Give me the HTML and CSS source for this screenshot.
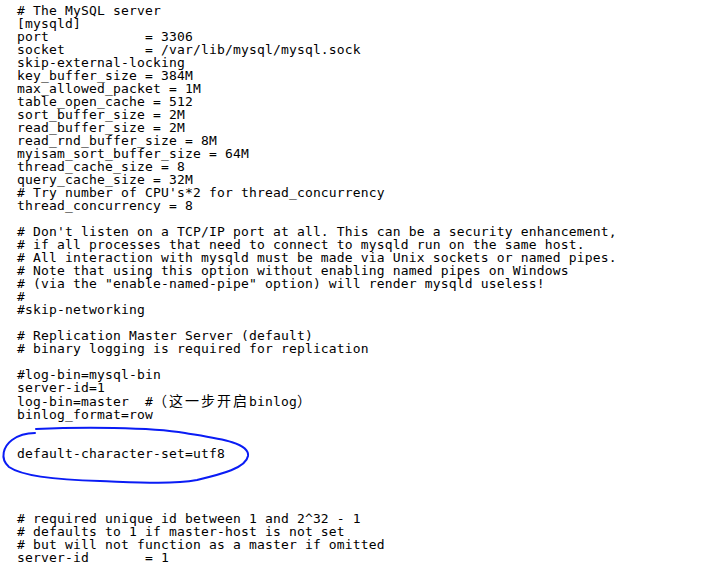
FILE: index.html
```html
<!DOCTYPE html>
<html>
<head>
<meta charset="utf-8">
<link rel="stylesheet" href="styles.css">
</head>
<body>
<div class="page">
<pre class="conf"># The MySQL server
[mysqld]
port            = 3306
socket          = /var/lib/mysql/mysql.sock
skip-external-locking
key_buffer_size = 384M
max_allowed_packet = 1M
table_open_cache = 512
sort_buffer_size = 2M
read_buffer_size = 2M
read_rnd_buffer_size = 8M
myisam_sort_buffer_size = 64M
thread_cache_size = 8
query_cache_size = 32M
# Try number of CPU's*2 for thread_concurrency
thread_concurrency = 8

# Don't listen on a TCP/IP port at all. This can be a security enhancement,
# if all processes that need to connect to mysqld run on the same host.
# All interaction with mysqld must be made via Unix sockets or named pipes.
# Note that using this option without enabling named pipes on Windows
# (via the "enable-named-pipe" option) will render mysqld useless!
#
#skip-networking

# Replication Master Server (default)
# binary logging is required for replication

#log-bin=mysql-bin
server-id=1
log-bin=master  #<span class="cjk">（这一步开启</span>binlog<span class="cjk">）</span>
binlog_format=row


default-character-set=utf8




# required unique id between 1 and 2^32 - 1
# defaults to 1 if master-host is not set
# but will not function as a master if omitted
server-id       = 1
</pre>
<svg class="circle" width="260" height="70" viewBox="0 420 260 70" xmlns="http://www.w3.org/2000/svg">
  <path d="M36,429 C 80,427 150,427 185,433 C 215,438 250,442 248,456 C 246,468 222,474 197,480 C 170,485 130,482 100,481 C 60,480 22,476 9,467 C -1,458 4,446 12,440 C 20,434 28,433 35,433" fill="none" stroke="#0a1cf5" stroke-width="2" stroke-linecap="round"/>
</svg>
</div>
</body>
</html>
```
FILE: styles.css
```css
html, body {
  margin: 0;
  padding: 0;
  background: #ffffff;
}
.page {
  position: relative;
  width: 702px;
  height: 573px;
  overflow: hidden;
}
.conf {
  margin: 0;
  padding: 4px 0 0 17px;
  font-family: "DejaVu Sans Mono", "Liberation Mono", "Noto Sans CJK SC", monospace;
  font-size: 13px;
  letter-spacing: 0.17px;
  line-height: 13px;
  color: #000000;
  white-space: pre;
}
.cjk {
  font-family: "Noto Sans CJK SC", sans-serif;
  font-size: 14px;
  line-height: 13px;
  letter-spacing: 2px;
}
.circle {
  position: absolute;
  left: 0;
  top: 420px;
}
```
